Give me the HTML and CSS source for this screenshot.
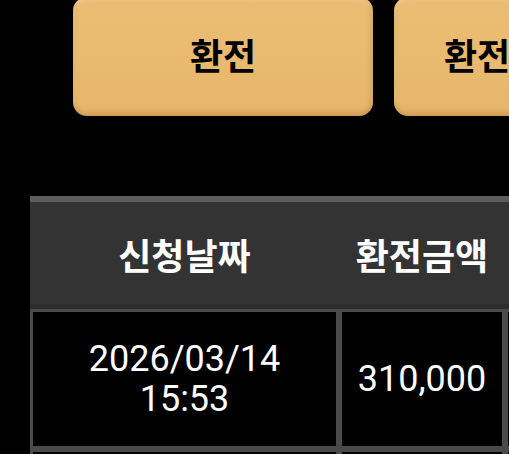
FILE: index.html
```html
<!DOCTYPE html>
<html lang="ko">
<head>
    <meta charset="UTF-8">
    <meta name="viewport" content="width=device-width, initial-scale=1.0">
    <title>환전 신청 내역</title>
    <link rel="stylesheet" href="styles.css">
</head>
<body>
    <div class="page">
        <div class="button-row">
            <a href="#" class="action-button">환전</a>
            <a href="#" class="action-button small">환전</a>
        </div>

        <table class="history">
            <thead>
                <tr>
                    <th class="col-date">신청날짜</th>
                    <th class="col-amount">환전금액</th>
                    <th class="col-status"></th>
                </tr>
            </thead>
            <tbody>
                <tr>
                    <td>2026/03/14<br>15:53</td>
                    <td>310,000</td>
                    <td></td>
                </tr>
                <tr>
                    <td></td>
                    <td></td>
                    <td></td>
                </tr>
            </tbody>
        </table>
    </div>
</body>
</html>
```

FILE: styles.css
```css
* {
    margin: 0;
    padding: 0;
    box-sizing: border-box;
}

body {
    background: #000;
    font-family: Roboto, "Noto Sans CJK KR", sans-serif;
    color: #fff;
    overflow: hidden;
}

.page {
    width: 760px;
}

.button-row {
    display: flex;
    gap: 21px;
    padding-left: 73px;
    margin-top: -3px;
}

.action-button {
    display: flex;
    align-items: center;
    justify-content: center;
    width: 300px;
    height: 119px;
    flex-shrink: 0;
    border-radius: 14px;
    background: linear-gradient(180deg, #ebbd74 0%, #e7b66b 100%);
    box-shadow: inset 0 -4px 5px rgba(120, 70, 10, 0.18),
                inset -3px 0 4px rgba(120, 70, 10, 0.12),
                inset 0 3px 4px rgba(255, 235, 190, 0.35);
    color: #000;
    font-family: "Noto Sans CJK KR", sans-serif;
    font-size: 36px;
    font-weight: 700;
    text-decoration: none;
    padding-bottom: 6px;
}

.action-button.small {
    width: 166px;
}

.history {
    margin-top: 80px;
    margin-left: 30px;
    border-collapse: separate;
    border-spacing: 0;
    table-layout: fixed;
}

.history th {
    height: 113px;
    background: #333;
    border-top: 6px solid #5e5e5e;
    border-bottom: 5px solid #2c2c2c;
    font-family: "Noto Sans CJK KR", sans-serif;
    font-size: 36px;
    font-weight: 700;
    color: #fff;
    padding-top: 2px;
}

.col-date {
    width: 309px;
}

.col-amount {
    width: 166px;
}

.col-status {
    width: 166px;
}

.history td {
    height: 140px;
    border: 3px solid #4a4a4a;
    text-align: center;
    vertical-align: middle;
    font-size: 36px;
    line-height: 40px;
    color: #fff;
}
```
